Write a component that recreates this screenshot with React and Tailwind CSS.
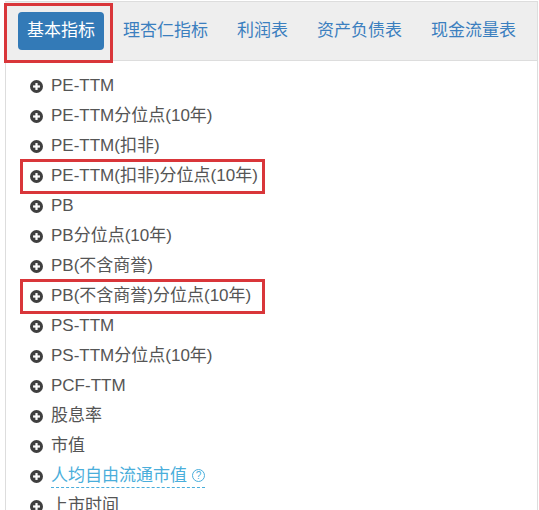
import React from 'react';

const tabs = ['理杏仁指标', '利润表', '资产负债表', '现金流量表'];

const items = [
  { label: 'PE-TTM' },
  { label: 'PE-TTM分位点(10年)' },
  { label: 'PE-TTM(扣非)' },
  { label: 'PE-TTM(扣非)分位点(10年)', marked: true },
  { label: 'PB' },
  { label: 'PB分位点(10年)' },
  { label: 'PB(不含商誉)' },
  { label: 'PB(不含商誉)分位点(10年)', marked: true },
  { label: 'PS-TTM' },
  { label: 'PS-TTM分位点(10年)' },
  { label: 'PCF-TTM' },
  { label: '股息率' },
  { label: '市值' },
  { label: '人均自由流通市值', link: true },
  { label: '上市时间' },
];

function PlusSign() {
  return (
    <svg width="13" height="13" viewBox="0 0 14 14" className="shrink-0">
      <circle cx="7" cy="7" r="7" fill="#3f3f3f" />
      <rect x="3.3" y="5.8" width="7.4" height="2.4" fill="#fff" />
      <rect x="5.8" y="3.3" width="2.4" height="7.4" fill="#fff" />
    </svg>
  );
}

export default function App() {
  return (
    <div
      className="w-[539px] h-[510px] overflow-hidden bg-white pt-px"
      style={{ fontFamily: '"Liberation Sans", "Noto Sans CJK SC", sans-serif' }}
    >
      {/* tab bar */}
      <div className="relative ml-[5px] w-[533px] h-[60px] bg-[#eeeeee] border-t border-r border-b border-[#dddddd] flex items-center">
        <div className="relative ml-[13px]">
          <div className="h-[38px] px-[9px] rounded-[4px] bg-[#337ab7] text-white text-[17px] flex items-center">
            基本指标
          </div>
          <div className="absolute -left-[14px] -top-[9px] -right-[9px] -bottom-[13px] border-[3px] border-[#d9363a]" />
        </div>
        <div className="ml-[19px] flex items-center gap-[29px] text-[17px] text-[#3b7fbf]">
          {tabs.map((t) => (
            <span key={t}>{t}</span>
          ))}
        </div>
      </div>

      {/* list panel */}
      <div className="ml-[5px] w-[533px] h-[460px] border-l border-r border-[#dddddd] pt-[10px]">
        {items.map((it) => (
          <div key={it.label} className="relative h-[30px] pl-[24px] flex items-center gap-[8px] text-[17px] text-[#555555]">
            <PlusSign />
            {it.link ? (
              <span className="flex items-center gap-[5px] text-[#4aaedb] border-b border-dashed border-[#4aaedb] leading-[22px]">
                {it.label}
                <span className="w-[13px] h-[13px] rounded-full border border-[#4aaedb] text-[10px] leading-none flex items-center justify-center">
                  ?
                </span>
              </span>
            ) : (
              <span>{it.label}</span>
            )}
            {it.marked && (
              <div className="absolute left-[14px] w-[245px] -top-[2px] -bottom-[3px] border-[3px] border-[#d9363a]" />
            )}
          </div>
        ))}
      </div>
    </div>
  );
}
